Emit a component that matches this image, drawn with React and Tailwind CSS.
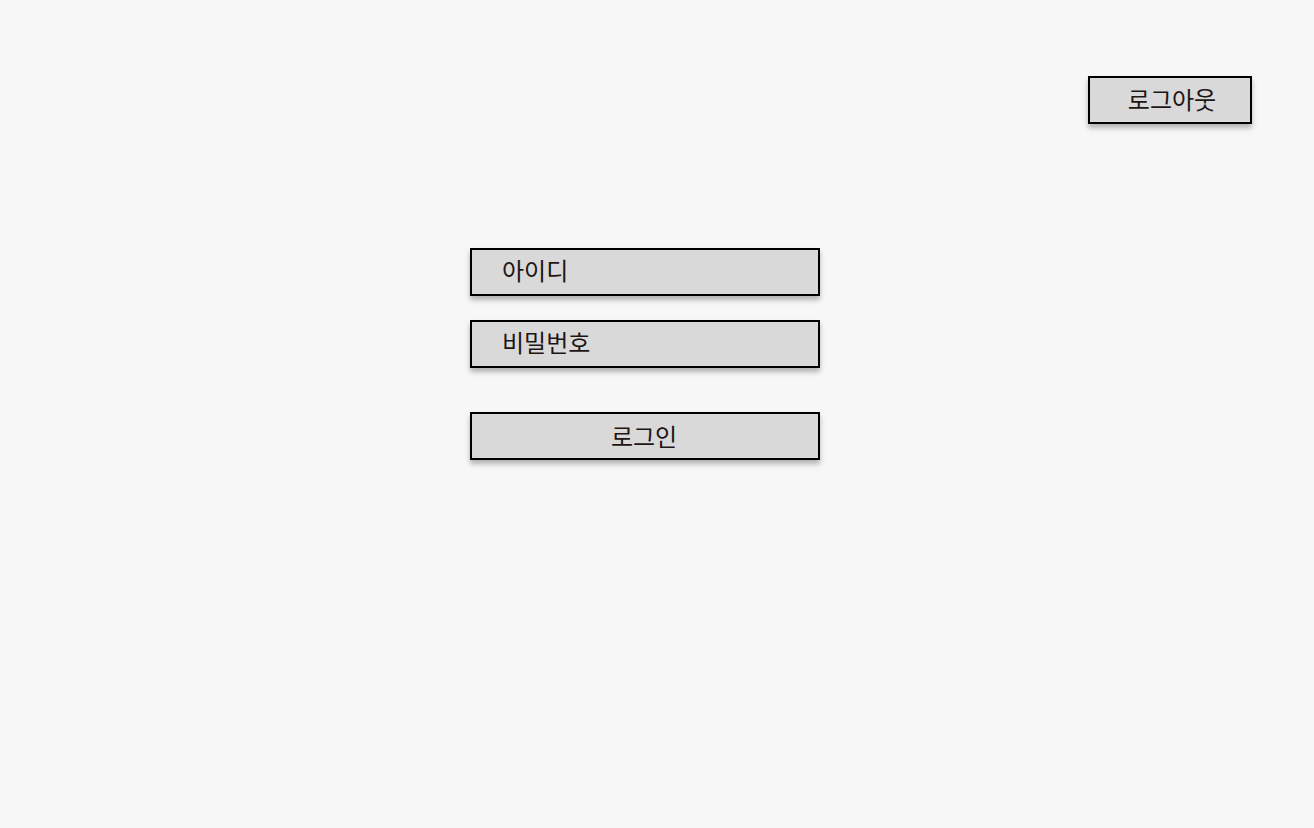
import React from "react";

const base =
  "w-[350px] h-[48px] border-2 border-black bg-[#d9d9d9] shadow-[0_4px_5px_rgba(0,0,0,0.28)] flex items-center text-[24px] leading-none text-[#1e1515]";

export default function App() {
  return (
    <div
      className="w-full min-h-[828px] bg-[#f7f7f7] flex flex-col"
      style={{ fontFamily: '"Noto Sans CJK KR", "Noto Sans", sans-serif' }}
    >
      <div className="flex justify-end pt-[76px] pr-[62px]">
        <button className="w-[164px] h-[48px] border-2 border-black bg-[#d9d9d9] shadow-[0_4px_5px_rgba(0,0,0,0.28)] flex items-center justify-center text-[24px] leading-none pb-[2px] pl-[4px] text-[#1e1515]">
          로그아웃
        </button>
      </div>
      <div className="ml-[470px] mt-[124px] flex flex-col">
        <div className={base + " pl-[30px] pb-[4px]"}>아이디</div>
        <div className={base + " pl-[30px] pb-[4px] mt-[24px]"}>비밀번호</div>
        <button className={base + " justify-center pr-[2px] pb-[1px] mt-[44px]"}>로그인</button>
      </div>
    </div>
  );
}
